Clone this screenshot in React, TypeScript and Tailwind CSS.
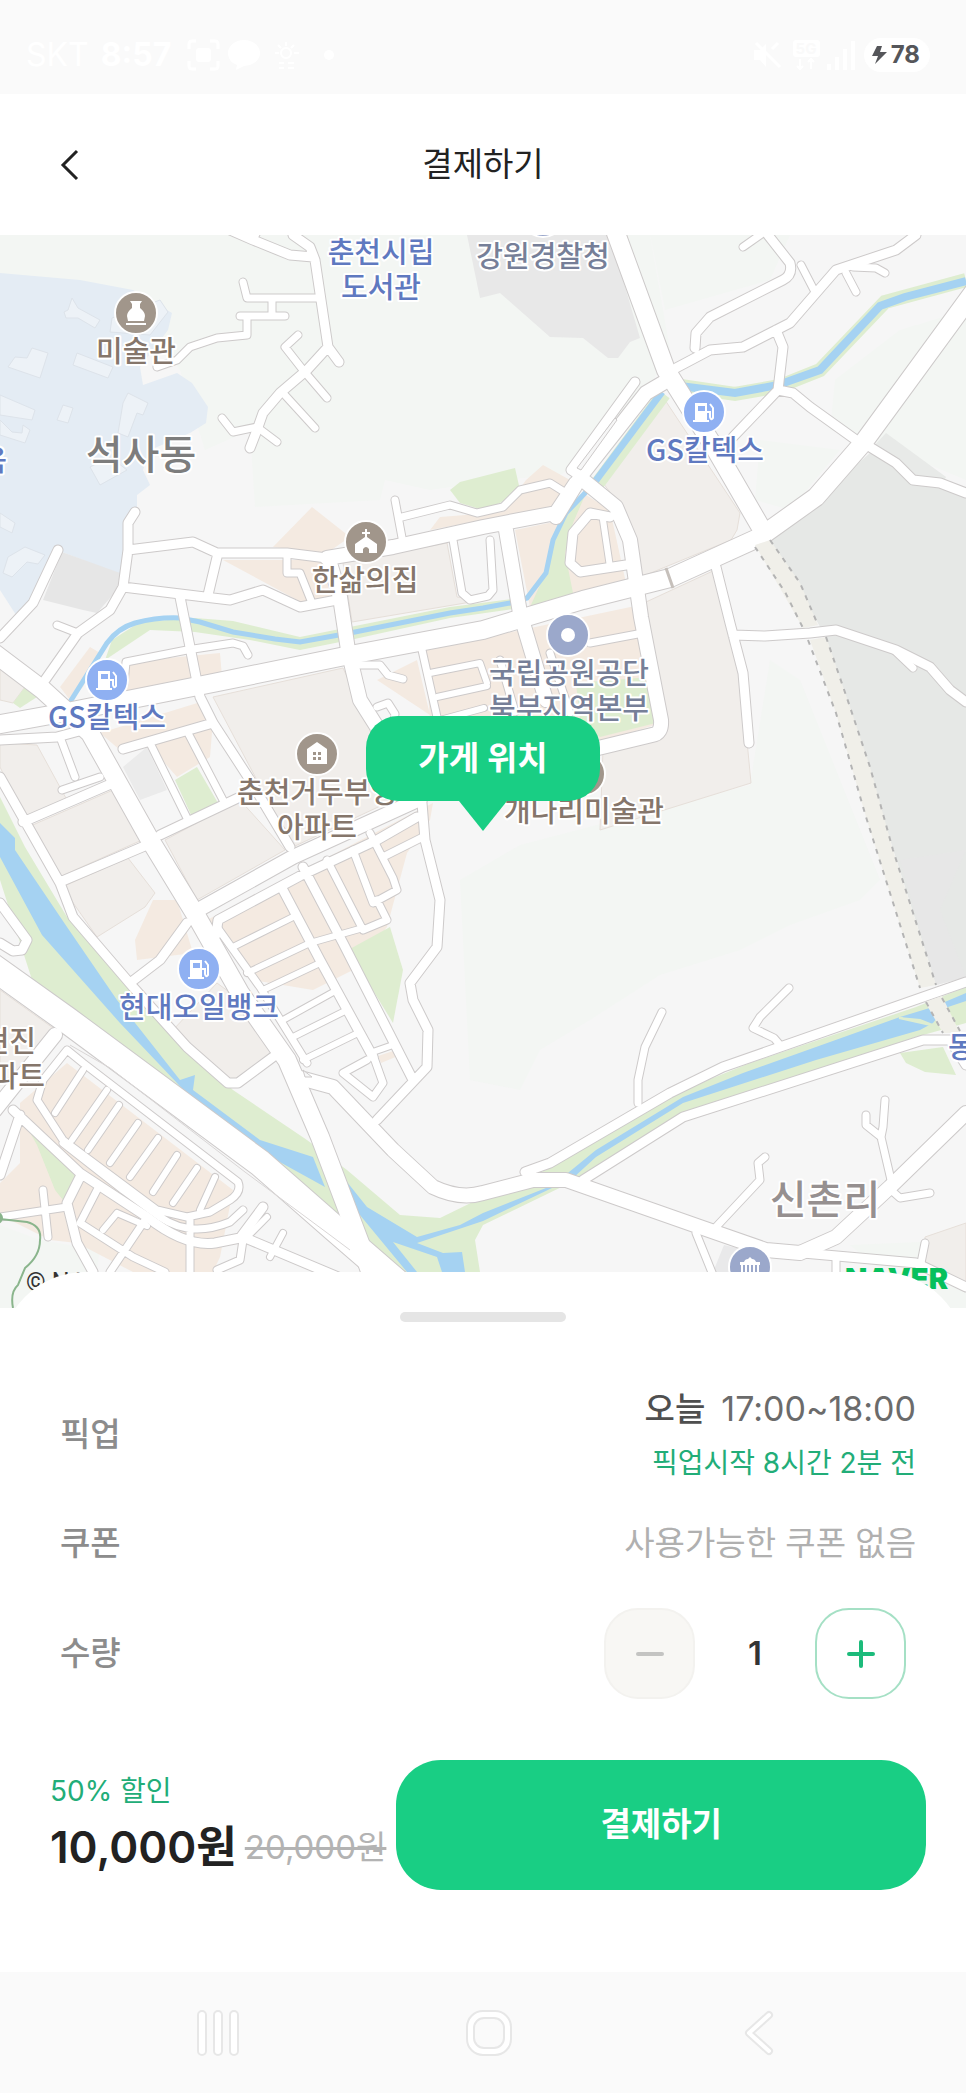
import { useState } from "react";

type Road = { width: number; d: string };
type Label = {
  text: string;
  x: number;
  y: number;
  color: string;
  size?: number;
  anchor?: "start" | "middle" | "end";
};
type Pin = {
  kind: "gas" | "museum" | "church" | "home" | "dot" | "bank";
  x: number;
  y: number;
};

const BLUE = "#5f79c0";
const BROWN = "#85766b";
const SLATE = "#767f98";

// Widest last, so that main roads cover the side streets they meet.
const roads: Road[] = [
  {
    width: 6,
    d: `M603 520L610 567 M233 947L293 917 M247 973L310 943L363 928 M263 990L320 963 M283 1020L337 990
      M293 1037L347 1010 M303 1060L360 1032 M370 1053L393 1045 M430 673L480 663L487 683 M437 697L487 686
      M440 720L484 708 M83 1070L55 1113 M107 1090L72 1140 M119 1105L88 1150 M138 1123L110 1163 M158 1138L130 1177
      M177 1155L153 1192 M197 1168L173 1203 M215 1177L200 1210 M283 1233L270 1257 M267 1217L247 1237
      M117 1213L103 1230 M117 1213L147 1226`,
  },
  {
    width: 7,
    d: `M298 335L285 347L303 370L327 398 M283 393L315 428 M222 418L233 432L257 427L277 442
      M318 298H247L243 282 M240 316H285 M272 300V316 M247 316V335L217 338L190 347L177 360L157 367
      M287 555V573H300L312 603 M395 500L403 543 M402 517L450 505L477 513L503 507L520 490L550 483L566 493
      M453 540L462 593L470 600L488 596L493 590L490 540 M60 737L75 777 M62 790L100 777
      M150 743L188 820 M188 733L223 800 M124 684L126 662L187 650L233 643L243 646L248 655
      M360 665H380L388 675L403 679 M377 707L388 703L395 714L393 725 M422 650L437 717
      M550 653L570 713 M590 643L643 633 M500 660L515 712 M217 927L260 987L307 1063
      M327 860L363 930L387 920L377 900 M353 850L373 903L397 890L393 878L370 833 M383 857L423 837
      M367 1060L343 1073L373 1097L383 1083L373 1055 M638 1103V1080L645 1047L662 1012
      M780 1045L774 1038L753 1028L760 1017L789 988 M891 1180L881 1137L866 1125V1115 M885 1100L883 1127L881 1137
      M891 1190L900 1198L930 1193 M716 1227L760 1180L758 1163L765 1157 M696 1233L713 1275 M925 1243L921 1263
      M836 1260V1275 M37 1100L43 1080L67 1050L83 1063L238 1182Q242 1192 230 1200L210 1212L187 1217L157 1210L63 1140Z
      M63 1143L123 1190L160 1217Q190 1238 230 1222L243 1210 M43 1190L48 1237 M0 1217L67 1207
      M97 1190L80 1223L133 1257L165 1272 M147 1217L110 1272 M190 1217V1272 M217 1270L240 1260L243 1240
      M57 625L75 632 M743 247L763 233 M801 265L815 292 M846 273L856 292 M853 267L876 268L885 273 M913 668L893 649
      M253 240L258 230`,
  },
  {
    width: 9,
    d: `M230 230L253 240L290 255L313 257 M293 235L310 247L315 260L328 347L339 362 M328 347L307 370L280 393L263 413L257 430L250 448
      M135 512L128 523V550L123 587L110 610L78 633L45 680 M58 550L33 603L0 638
      M128 550L193 542L217 553H287L327 558 M123 587L213 598L230 600L263 590L300 607L337 600 M218 553L208 595
      M180 597L200 697L213 723L250 780L290 847 M635 382L571 470L583 478
      M676 368L710 350L743 347L790 323L816 293L836 270L896 250L916 235 M695 348L696 333L710 317L783 280Q793 275 790 263L768 235
      M776 330L783 347L778 390L733 437 M778 390L793 393L810 407L856 440 M870 447L896 463L913 480L940 483L966 493
      M610 517L590 513L573 533L570 563L580 572L626 565 M716 567L730 623L743 673L749 743
      M733 635L765 636L810 633L836 630L896 650L930 667L950 690L966 702
      M0 740L57 737L83 730 M23 822L113 783 M0 777L60 883L73 917L133 987L187 1047L228 1083L238 1083L273 1057
      M60 882L147 845 M160 835L240 797 M123 749L213 723 M187 923L160 960L130 983
      M216 935L218 920L300 876L377 840L417 817 M283 890L320 960L373 1057 M303 867L343 943L413 1080
      M422 803L425 840L440 900L437 947L410 983L413 1000L428 1030L427 1067L377 1120
      M0 903L27 940L22 950L13 951L0 943 M13 1110L80 1173L147 1217Q185 1247 215 1243L240 1238L263 1207
      M80 1177L67 1203L77 1243L93 1272 M20 1115L0 1175 M243 1237L350 1282
      M525 1172L550 1163L670 1093L723 1067L966 982 M583 1180L683 1117L923 1040H950L966 1065 M803 1253L916 1263L966 1287`,
  },
  {
    width: 14,
    d: `M327 558L393 547L483 527L556 513L576 483 M330 563L340 597L348 650L360 700L377 727L395 790
      M506 530L520 613L546 700 M663 383L646 393L583 473L556 517 M583 480L616 507L630 540L641 617L661 720Q662 734 652 735L590 750
      M198 910L293 857L420 799 M55 1035L-5 1110
      M300 1078L333 1087L393 1150L433 1187Q460 1200 483 1193L533 1180H566L700 1227L766 1250L800 1253L836 1237L890 1187L966 1113`,
  },
  {
    width: 18,
    d: `M613 225L666 370L716 450L760 526 M-10 650L43 690L90 733L150 840L197 917L240 993L287 1060L320 1137L360 1243L375 1285
      M975 290L863 443L816 497L760 537L670 578L583 600L483 630L350 655L213 683L67 712L-5 725`,
  },
  { width: 26, d: "M-10 965L67 1020L260 1163L333 1227L400 1285" },
];

const buildings = [
  "M72 298L78 308L100 320L95 328L78 318L66 318L64 312L68 310Z",
  "M32 348L48 353L40 378L8 367L15 357L27 358Z",
  "M77 353L113 367L108 378L73 365Z",
  "M128 393L148 403L143 415L137 413L128 437L118 433L123 403Z",
  "M63 405L73 408L68 423L57 420Z",
  "M0 395L35 410L32 420L0 415Z",
  "M0 420L12 432L22 433L23 425L30 430L25 443L0 435Z",
  "M90 467L110 457L127 470L100 485Z",
  "M0 513L15 523L12 533L0 527Z",
  "M8 557L25 547L45 555L38 564L27 562L12 577L3 573Z",
  "M112 318L160 300L168 312L150 335L110 332Z",
];

const warmBlocks = [
  "M312 507L350 537L327 553L273 547Z",
  "M223 560H327L337 600L310 607L273 587Z",
  "M526 480L543 465L570 480L553 507L483 520L430 530L440 517L503 512Z",
  "M515 530L563 520L583 493L610 510L626 583L530 607Z",
  "M127 662L220 653L222 677L100 705Z",
  "M90 647L100 653L83 687L70 700L60 687Z",
  "M100 733L207 700L213 720L210 757L177 777L147 743L120 750Z",
  "M377 680L417 660L430 715Z",
  "M425 650L640 605L655 725L590 745L430 720Z",
  "M207 920L413 813L433 803L430 820L407 853L397 890L387 927L353 970L313 990L253 980Z",
  "M153 900H177L193 953L137 960L135 940Z",
  "M20 1103L67 1063L233 1190L220 1257L213 1272H133L77 1243L50 1240L0 1215V1183L20 1163Z",
  "M378 1056L396 1050L398 1056L381 1063Z",
];

const paleBlocks = [
  "M665 400L740 513L737 530L731 540L641 577L626 513L603 483Z",
  "M646 602L715 570L723 597L740 667L751 783L600 830L603 750L666 733Z",
  "M343 563L447 543L457 597L483 600L352 622Z",
  "M213 697L343 668L370 727L393 800L293 847L250 767Z",
  "M165 840L240 800L285 850L197 900Z",
  "M28 827L113 790L142 840L57 878Z",
  "M0 743L37 745L67 800L25 818L0 767Z",
  "M62 887L128 858L155 893L145 907L97 937Z",
  "M173 1030L217 983L240 1000L272 1055L235 1083L175 1030Z",
  "M0 990L53 1028L30 1060L0 1085Z",
  "M925 1237L966 1223V1285L925 1262Z",
  "M0 660L25 687L13 703L0 700Z",
];

const labels: Label[] = [
  { text: "춘천시립", x: 381, y: 263, color: BLUE },
  { text: "도서관", x: 381, y: 298, color: BLUE },
  { text: "강원경찰청", x: 543, y: 267, color: SLATE },
  { text: "미술관", x: 136, y: 362, color: BROWN },
  { text: "석사동", x: 141, y: 469, color: "#7d7d7d", size: 40 },
  { text: "육", x: 7, y: 471, color: BLUE, anchor: "end" },
  { text: "GS칼텍스", x: 705, y: 461, color: BLUE },
  { text: "한삶의집", x: 365, y: 591, color: BROWN },
  { text: "GS칼텍스", x: 107, y: 728, color: BLUE },
  { text: "국립공원공단", x: 569, y: 684, color: SLATE },
  { text: "북부지역본부", x: 569, y: 719, color: SLATE },
  { text: "춘천거두부영", x: 317, y: 803, color: BROWN },
  { text: "아파트", x: 317, y: 838, color: BROWN },
  { text: "개나리미술관", x: 584, y: 822, color: BROWN },
  { text: "현대오일뱅크", x: 199, y: 1018, color: BLUE },
  { text: "현진", x: 36, y: 1052, color: BROWN, anchor: "end" },
  { text: "아파트", x: 45, y: 1087, color: BROWN, anchor: "end" },
  { text: "신촌리", x: 825, y: 1214, color: "#969090", size: 40 },
  { text: "동", x: 948, y: 1058, color: BLUE, anchor: "start" },
];

const pins: Pin[] = [
  { kind: "dot", x: 543, y: 216 },
  { kind: "museum", x: 136, y: 313 },
  { kind: "gas", x: 704, y: 412 },
  { kind: "church", x: 366, y: 542 },
  { kind: "dot", x: 568, y: 635 },
  { kind: "gas", x: 107, y: 680 },
  { kind: "home", x: 317, y: 754 },
  { kind: "museum", x: 584, y: 774 },
  { kind: "gas", x: 199, y: 969 },
  { kind: "bank", x: 750, y: 1267 },
];

const pinColors: Record<Pin["kind"], string> = {
  gas: "#8fb0f2",
  museum: "#a1968b",
  church: "#a1968b",
  home: "#a1968b",
  dot: "#9ba8cb",
  bank: "#9ba8cb",
};

function PinGlyph({ kind }: { kind: Pin["kind"] }) {
  switch (kind) {
    case "gas":
      return (
        <>
          <path d="M-9 -9H3V8H5V10H-11V8H-9Z" fill="#fff" />
          <path d="M-6 -6H1V-1H-6Z" fill="#8fb0f2" />
          <path
            d="M6 -8L9 -4V6Q7 9 6 5V0H3"
            fill="none"
            stroke="#fff"
            strokeWidth="2"
          />
        </>
      );
    case "museum":
      return (
        <path
          d="M-6 -12H6L4 -9V-5Q9 -1 9 3L8 8H-8L-9 3Q-9 -1 -4 -5V-9ZM-10 10H10V12H-10Z"
          fill="#fff"
        />
      );
    case "church":
      return (
        <path
          d="M-1 -13H1V-10H4V-8H1V-5L11 2V11H3V7Q0 3 -3 7V11H-11V2L-1 -5V-8H-4V-10H-1Z"
          fill="#fff"
        />
      );
    case "home":
      return (
        <>
          <path d="M0 -12L10 -5V10H-10V-5Z" fill="#fff" />
          <path
            d="M-4 -2H-1V1H-4ZM1 -2H4V1H1ZM-4 3H-1V6H-4ZM1 3H4V6H1Z"
            fill="#a1968b"
          />
        </>
      );
    case "bank":
      return (
        <>
          <path d="M-10 -5H-6Q-5 -8 -2 -8L0 -10L2 -8Q5 -8 6 -5H10V-2H9V10H-9V-2H-10Z" fill="#fff" />
          <path d="M-6 -2V10M-2 -2V10M2 -2V10M6 -2V10" stroke="#9ba8cb" strokeWidth="2" />
        </>
      );
    default:
      return <circle r="7" fill="#fff" />;
  }
}

function StoreMap() {
  return (
    <svg
      className="block h-[1073px] w-full"
      viewBox="0 235 966 1073"
      preserveAspectRatio="xMidYMid slice"
      role="img"
      aria-label="가게 주변 지도"
    >
      <rect y="235" width="966" height="1073" fill="#f6f6f6" />

      {/* Hills */}
      <g fill="#f3f6f3">
        <path d="M0 235H650L670 350L620 440L560 475L500 480L430 490L385 480L380 500L255 507L250 430L205 450L180 370L150 330L0 290Z" />
        <path d="M650 235H790L770 280L665 310Z" />
        <path d="M900 330L966 310V480L870 440L830 430L835 380Z" />
        <path d="M770 660L800 680L880 880L860 900L790 925L740 950L660 975L590 1020L540 1050L520 1090L470 1080L460 880L520 845L750 785Z" />
        <path d="M760 440L840 450L790 510L755 500Z" />
        <path d="M0 1225L40 1240L100 1250L90 1308H0Z" />
        <path d="M850 1245L966 1240V1308H930Z" />
      </g>

      {/* Campus and grey lots */}
      <path
        d="M0 273L80 280L133 290L172 313L168 330L140 367L143 385L177 373L192 383L208 407L206 423L190 433L150 450L143 470L150 485L137 495V510L125 530L122 575L62 552L43 583L18 618L0 590Z"
        fill="#e4ecf4"
      />
      <path d={buildings.join(" ")} fill="#edf2f7" stroke="#dde3ea" strokeWidth="1" />
      <path d="M62 552L120 573L117 590L97 613L83 610L43 600Z" fill="#e6e6e6" />
      <path
        d="M467 235H610L640 338L630 342L618 358H608L583 338L550 337L500 293L480 298Z"
        fill="#e8e8e8"
      />
      <path d="M123 767L147 747L167 790L140 800Z" fill="#ebebeb" />
      <path d="M713 1272L724 1245L745 1250V1275Z" fill="#e9e9ea" />
      <path d="M770 540L870 453L966 497V977L936 985L826 637Z" fill="#e6e8e6" />
      <path d="M966 850L940 910L966 977L936 985L900 860Z" fill="#e7e7e7" />
      <path d="M886 433L946 477L943 483L910 480L873 447Z" fill="#e8eae8" />

      <path d={paleBlocks.join(" ")} fill="#f1eeeb" stroke="#e6dfd9" strokeWidth="1" />
      <path d={warmBlocks.join(" ")} fill="#f4eae1" />

      {/* Parks and river banks */}
      <g fill="#deedd0">
        <path d="M450 490L460 482L515 468L520 490L500 503L483 510L460 503Z" />
        <path d="M586 493L573 523L565 553L573 593L530 607L550 563L555 530Z" />
        <path d="M175 780L197 767L218 803L192 817Z" />
        <path d="M348 950L390 927L403 970L393 1023Z" />
        <path d="M576 683L650 677L656 723L600 737L580 720Z" />
        <path d="M25 687L37 697L20 708L13 703Z" />
        <path d="M20 1115L60 1155L75 1175L63 1200L55 1190L37 1145Z" />
        <path d="M0 797L25 847L67 917L133 990L187 1047L233 1090L307 1140L347 1170L400 1215L440 1218L483 1197L546 1170L676 1093L750 1063L916 1007L966 987V1023L916 1037L683 1113L576 1180L483 1225L475 1240L480 1272H393L337 1220L67 1013L33 983L0 880Z" />
        <path d="M900 1053L943 1047L956 1075L925 1072L906 1063Z" />
        <path d="M195 618L233 621L300 637L350 627L450 607L520 598V608L450 618L350 640L300 650L250 640L195 632L150 630L120 650L105 660L112 640L140 622Z" />
      </g>
      <path
        d="M598 483L664 394M674 385L735 394L780 386L820 370L885 302L966 280"
        fill="none"
        stroke="#deedd0"
        strokeWidth="14"
      />
      <g fill="none" stroke="#a5d2f2">
        <path
          strokeWidth="5"
          d="M70 702L107 643Q118 628 135 623Q158 617 180 618L200 622L233 632L275 639L300 642L350 633L450 613L483 608L510 603L527 598L546 573L553 540L566 513L586 492"
        />
        <path strokeWidth="7" d="M594 483L662 392" />
        <path strokeWidth="8" d="M680 386L735 393L778 385L820 370L880 306L905 297L966 281" />
      </g>
      <g fill="#a5d2f2">
        <path d="M0 823L15 838V850L67 927L117 1000L180 1080L195 1075L193 1090L260 1140L313 1157L325 1187L267 1155L213 1123L177 1083L120 1023L42 935L0 857Z" />
        <path d="M343 1177L367 1207L417 1237L460 1225L483 1213L546 1188L563 1177L596 1150L683 1097L743 1073L816 1047L900 1017L933 1007L966 993V1001L945 1008L933 1023L920 1030L816 1060L683 1103L596 1157L573 1178L483 1221L417 1243L443 1253L462 1252L465 1272H442L437 1257L393 1242L417 1272H407L350 1203Z" />
      </g>
      <path d="M899 1018L935 1026L920 1020Z" fill="#deedd0" stroke="#deedd0" strokeWidth="2" />

      <g fill="none" strokeLinecap="round" strokeLinejoin="round">
        {roads.map((road) => (
          <path key={road.width} d={road.d} stroke="#cdcaca" strokeWidth={road.width + 2} />
        ))}
        {roads.map((road) => (
          <path key={road.width} d={road.d} stroke="#fff" strokeWidth={road.width} />
        ))}
      </g>
      <path d="M666 568L673 588" stroke="#c6c0bb" strokeWidth="3" />
      <path d="M303 1070L312 1077H305Z" fill="#f6f6f6" stroke="#cdcaca" />
      <path d="M615 418L617 420L581 470L577 468Z" fill="#f6f6f6" stroke="#cdcaca" />
      <path
        d="M70 1045L110 1068L245 1172L330 1235L350 1250"
        fill="none"
        stroke="#d9d6d6"
        strokeWidth="1"
      />

      {/* Railway */}
      <path
        d="M755 545L770 540L800 583L818 625L803 628Z M810 640L826 637L850 707L870 767L893 850L936 985L920 988L890 893L866 817L836 713Z M925 1002L942 996L960 1033H943Z"
        fill="#f0efe9"
      />
      <path
        d="M755 547L785 592L803 628M808 640L836 713L866 817L890 893L920 988M770 540L800 583L818 625M826 637L850 707L870 767L893 850L936 985M926 1002L943 1033M942 998L960 1031"
        fill="none"
        stroke="#b4b4b4"
        strokeWidth="2"
        strokeDasharray="5 6"
      />

      <path
        d="M0 1219L27 1222Q42 1226 40 1240Q40 1256 25 1268L18 1285Q10 1292 13 1308"
        fill="none"
        stroke="#8ab58c"
        strokeWidth="2"
      />
      <circle cx="-3" cy="1218" r="6" fill="#8ab58c" />

      {pins.map((pin) => (
        <g key={`${pin.x}-${pin.y}`} transform={`translate(${pin.x} ${pin.y})`}>
          <circle r="21" fill={pinColors[pin.kind]} stroke="#fff" strokeWidth="2" />
          <PinGlyph kind={pin.kind} />
        </g>
      ))}

      {labels.map((label) => (
        <text
          key={`${label.text}-${label.y}`}
          x={label.x}
          y={label.y}
          fill={label.color}
          fontSize={label.size ?? 29}
          fontWeight="500"
          textAnchor={label.anchor ?? "middle"}
          stroke="#fff"
          strokeWidth="4"
          strokeLinejoin="round"
          paintOrder="stroke"
          className="font-['Noto_Sans_CJK_KR',sans-serif]"
        >
          {label.text}
        </text>
      ))}
      <text x="26" y="1291" fontSize="25" fill="#333" className="font-[Roboto,sans-serif]">
        © NAVER
      </text>
      <text x="948" y="1289" fontSize="29" fontWeight="900" textAnchor="end" fill="#06c05c">
        NAVER
      </text>
    </svg>
  );
}

function StatusBar() {
  return (
    <div className="flex h-[94px] items-center justify-between bg-[#fafafa] pt-4 pr-9 pl-[26px] text-white">
      <div className="flex items-center gap-3">
        <span className="text-[32px]">SKT</span>
        <span className="text-[32px] font-bold">8:57</span>
        <svg className="ml-1 h-8 w-[150px]" viewBox="0 0 150 32" aria-hidden="true">
          <path
            d="M2 10V5Q2 2 5 2H9M23 2H28Q31 2 31 5V10M31 22V27Q31 30 28 30H23M9 30H5Q2 30 2 27V22"
            fill="none"
            stroke="#fff"
            strokeWidth="3"
          />
          <rect x="9" y="9" width="15" height="14" rx="3" fill="#fff" />
          <path d="M57 1C66 1 73 7 73 14S66 27 57 27L49 31L50 26C44 24 41 19 41 14C41 7 48 1 57 1Z" fill="#fff" />
          <circle cx="99" cy="14" r="5" fill="none" stroke="#fff" strokeWidth="2" />
          <path
            d="M99 3V7M88 14H92M107 14H112M91 6L94 9M107 6L104 9M92 24H97M92 29H97M101 24H107M101 29H107"
            stroke="#fff"
            strokeWidth="2"
          />
          <circle cx="142" cy="16" r="5" fill="#fff" />
        </svg>
      </div>
      <div className="flex items-center gap-2">
        <svg className="h-8 w-[104px]" viewBox="0 0 104 32" aria-hidden="true">
          <path d="M2 11H8L14 5V28L8 21H2Z" fill="#fff" />
          <path d="M4 4L28 28M20 10L26 4" stroke="#fff" strokeWidth="3" />
          <rect x="41" y="1" width="27" height="17" rx="3" fill="#fff" />
          <text x="54" y="15" fontSize="15" fontWeight="700" textAnchor="middle" fill="#fafafa">
            5G
          </text>
          <path
            d="M48 20V30M45 27L48 30L51 27M59 30V20M56 23L59 20L62 23"
            fill="none"
            stroke="#fff"
            strokeWidth="2"
          />
          <path d="M75 25H79V31H75ZM83 18H87V31H83ZM91 10H95V31H91ZM99 2H103V31H99Z" fill="#fff" />
        </svg>
        <span className="flex h-[34px] items-center gap-1 rounded-full bg-white pr-2.5 pl-2 text-2xl font-bold text-[#55565a]">
          <svg className="h-[18px] w-[15px]" viewBox="0 0 15 18" aria-hidden="true">
            <path d="M5 0H10L8 6H15L3 18L6 10H0Z" fill="currentColor" />
          </svg>
          78
        </span>
      </div>
    </div>
  );
}

function NavigationBar() {
  return (
    <nav className="flex h-[121px] items-center justify-between bg-[#fafafa] pr-[177px] pl-[188px]">
      <button type="button" aria-label="최근 앱" className="flex size-15 items-center justify-center">
        <svg className="h-[46px] w-[42px]" viewBox="0 0 42 46" fill="#fff" stroke="#e7e7e7" strokeWidth="2">
          <rect x="1" y="1" width="8" height="44" rx="4" />
          <rect x="17" y="1" width="8" height="44" rx="4" />
          <rect x="33" y="1" width="8" height="44" rx="4" />
        </svg>
      </button>
      <button type="button" aria-label="홈" className="flex size-15 items-center justify-center">
        <svg className="size-[46px]" viewBox="0 0 46 46" stroke="#e7e7e7" strokeWidth="2">
          <rect x="1" y="1" width="44" height="44" rx="16" fill="#fff" />
          <rect x="8" y="8" width="30" height="30" rx="10" fill="#fafafa" />
        </svg>
      </button>
      <button type="button" aria-label="뒤로" className="flex size-15 items-center justify-center">
        <svg className="h-[46px] w-8" viewBox="0 0 32 46" fill="none" strokeLinecap="round" strokeLinejoin="round">
          <path d="M26 5L6 23L26 41" stroke="#e7e7e7" strokeWidth="8" />
          <path d="M26 5L6 23L26 41" stroke="#fff" strokeWidth="4" />
        </svg>
      </button>
    </nav>
  );
}

function App() {
  const [quantity, setQuantity] = useState(1);
  const total = (10000 * quantity).toLocaleString("en-US");
  const original = (20000 * quantity).toLocaleString("en-US");

  return (
    <div className="min-h-screen bg-white font-[Inter,'Noto_Sans_CJK_KR',sans-serif] text-[#222]">
      <StatusBar />

      <header className="grid h-[141px] grid-cols-[1fr_auto_1fr] items-center px-12">
        <button type="button" aria-label="뒤로 가기" className="flex size-11 items-center justify-center">
          <svg className="h-8 w-5" viewBox="0 0 20 32" fill="none" stroke="currentColor" strokeWidth="3">
            <path d="M17 2L3 16L17 30" />
          </svg>
        </button>
        <h1 className="text-[33px]">결제하기</h1>
      </header>

      <div className="relative">
        <StoreMap />
        <div className="absolute inset-0 flex flex-col items-center justify-center pt-1">
          <span className="flex h-[85px] items-center rounded-[32px] bg-[#19ce84] px-[52px] text-[33px] font-bold text-white">
            가게 위치
          </span>
          <svg className="h-[30px] w-12" viewBox="0 0 48 30" aria-hidden="true">
            <path d="M0 0H48L24 30Z" fill="#19ce84" />
          </svg>
        </div>
      </div>

      <main className="relative -mt-9 rounded-t-[85px] bg-white pt-10 pb-[82px]">
        <div className="mx-auto h-2.5 w-[166px] rounded-full bg-[#e5e5e5]" />

        <dl className="mt-[59px] pr-[50px] pl-15 text-[33px]">
          <div className="flex items-center justify-between">
            <dt className="font-medium text-[#8c8c8c]">픽업</dt>
            <dd className="text-right">
              <p className="leading-[56px] text-[#6b6b6b]">
                <strong className="mr-4 font-medium text-[#4f4f4f]">오늘</strong>
                <span className="text-[34px]">17:00~18:00</span>
              </p>
              <p className="text-[28px] leading-[52px] text-[#22ad78]">
                픽업시작 8시간 2분 전
              </p>
            </dd>
          </div>
          <div className="mt-[30px] flex items-center justify-between leading-[48px]">
            <dt className="font-medium text-[#8c8c8c]">쿠폰</dt>
            <dd className="text-[#b0b0b0]">사용가능한 쿠폰 없음</dd>
          </div>
          <div className="mt-[41px] flex items-center justify-between pr-2.5">
            <dt className="font-medium text-[#8c8c8c]">수량</dt>
            <dd className="flex items-center">
              <button
                type="button"
                aria-label="수량 줄이기"
                disabled={quantity === 1}
                onClick={() => setQuantity(quantity - 1)}
                className="flex size-[91px] items-center justify-center rounded-[34px] border-2 border-[#f3f2ef] bg-[#f8f7f4] text-[#c4c4c2]"
              >
                <svg className="size-8" viewBox="0 0 32 32" stroke="currentColor" strokeWidth="4" strokeLinecap="round">
                  <path d="M4 16H28" />
                </svg>
              </button>
              <output className="w-[120px] text-center font-semibold text-[#333]">
                {quantity}
              </output>
              <button
                type="button"
                aria-label="수량 늘리기"
                onClick={() => setQuantity(quantity + 1)}
                className="flex size-[91px] items-center justify-center rounded-[34px] border-2 border-[#a5e0c5] text-[#1cbb7b]"
              >
                <svg className="size-8" viewBox="0 0 32 32" stroke="currentColor" strokeWidth="4" strokeLinecap="round">
                  <path d="M4 16H28M16 4V28" />
                </svg>
              </button>
            </dd>
          </div>
        </dl>

        <div className="mt-[61px] flex items-center gap-2.5 pr-10 pl-[50px]">
          <div className="shrink-0 pb-1">
            <p className="text-[28px] leading-[48px] text-[#22ad78]">50% 할인</p>
            <p className="flex items-center gap-2 leading-[64px]">
              <strong className="text-[44px] font-semibold">{total}원</strong>
              <s className="text-[33px] text-[#b3b3b3]">{original}원</s>
            </p>
          </div>
          <button
            type="button"
            className="h-[130px] flex-1 rounded-[45px] bg-[#19ce84] text-[33px] font-semibold text-white"
          >
            결제하기
          </button>
        </div>
      </main>

      <NavigationBar />
    </div>
  );
}

export default App;
